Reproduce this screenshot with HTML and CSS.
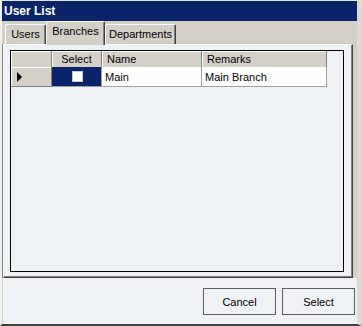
FILE: index.html
```html
<!DOCTYPE html>
<html>
<head>
<meta charset="utf-8">
<title>User List</title>
<link rel="stylesheet" href="styles.css">
</head>
<body>
<div class="window">
  <div class="titlebar">User List</div>
  <div class="tabs">
    <div class="tab tab-users">Users</div>
    <div class="tab tab-active tab-branches">Branches</div>
    <div class="tab tab-departments">Departments</div>
  </div>
  <div class="panel">
    <div class="grid">
      <div class="grid-row grid-head">
        <div class="cell hcell"></div>
        <div class="cell hcell center">Select</div>
        <div class="cell hcell">Name</div>
        <div class="cell hcell">Remarks</div>
      </div>
      <div class="grid-row grid-data">
        <div class="cell rowhead"><span class="arrow"></span></div>
        <div class="cell selcell"><span class="check"></span></div>
        <div class="cell dcell">Main</div>
        <div class="cell dcell">Main Branch</div>
      </div>
    </div>
  </div>
  <div class="footer">
    <button class="btn">Cancel</button>
    <button class="btn">Select</button>
  </div>
</div>
</body>
</html>
```
FILE: styles.css
```css
html, body {
  margin: 0;
  padding: 0;
  background: #d4d0c8;
}

body {
  font-family: "Liberation Sans", Arial, sans-serif;
  font-size: 11px;
  color: #000;
}

.window {
  width: 362px;
  height: 326px;
  box-sizing: border-box;
  background: #d4d0c8;
  border-top: 1px solid #e4e2dc;
  border-left: 2px solid #f2f1ee;
  border-right: 5px solid #dedbd4;
  border-bottom: 2px solid #404040;
  display: flex;
  flex-direction: column;
}

.titlebar {
  height: 20px;
  flex: none;
  background: #0a246a;
  color: #fff;
  font-weight: bold;
  font-size: 12px;
  line-height: 20px;
  padding-left: 2px;
}

.tabs {
  height: 23px;
  flex: none;
  display: flex;
  align-items: flex-end;
  padding-left: 3px;
  position: relative;
  z-index: 1;
}

.tab {
  box-sizing: border-box;
  height: 20px;
  border-top: 1px solid #fff;
  border-left: 1px solid #fff;
  border-right: 1px solid #404040;
  box-shadow: inset -1px 0 0 #808080;
  border-radius: 2px 2px 0 0;
  text-align: center;
  line-height: 18px;
  background: #d4d0c8;
}

.tab-users { width: 41px; }
.tab-departments { width: 71px; }

.tab-active {
  width: 59px;
  height: 24px;
  margin-bottom: -1px;
  line-height: 18px;
  padding-bottom: 3px;
}

.panel {
  height: 234px;
  flex: none;
  box-sizing: border-box;
  width: 350px;
  margin-left: 1px;
  background: #eef2f5;
  border-top: 1px solid #fff;
  border-left: 1px solid #fff;
  border-right: 1px solid #404040;
  border-bottom: 1px solid #404040;
  box-shadow: inset -1px -1px 0 #808080, -1px 0 0 #808080;
  padding: 5px 8px 5px 6px;
}

.grid {
  box-sizing: border-box;
  width: 334px;
  height: 222px;
  border: 1px solid #000;
  background: #eef2f5;
}

.grid-row {
  display: grid;
  grid-template-columns: 41px 50px 100px 125px;
}

.grid-head {
  height: 16px;
}

.grid-data {
  height: 20px;
}

.cell {
  box-sizing: border-box;
  display: flex;
  align-items: center;
  overflow: hidden;
  white-space: nowrap;
}

.hcell {
  background: #d4d0c8;
  border-right: 1px solid #808080;
  box-shadow: inset 1px 1px 0 #fff;
  padding-left: 5px;
  line-height: 15px;
}

.hcell.center {
  justify-content: center;
  padding-left: 0;
}

.rowhead {
  background: #d4d0c8;
  border-right: 1px solid #808080;
  border-bottom: 1px solid #808080;
  box-shadow: inset 1px 1px 0 #fff;
  padding-left: 6px;
}

.arrow {
  width: 0;
  height: 0;
  border-left: 5px solid #000;
  border-top: 5px solid transparent;
  border-bottom: 5px solid transparent;
}

.selcell {
  background: #0a246a;
  border-right: 1px solid #a0a0a0;
  border-bottom: 1px solid #a0a0a0;
  justify-content: center;
}

.check {
  box-sizing: border-box;
  width: 11px;
  height: 11px;
  background: #fff;
  border: 1px solid #c8c8c8;
  margin-left: 1px;
}

.dcell {
  background: #fff;
  border-right: 1px solid #a0a0a0;
  border-bottom: 1px solid #a0a0a0;
  padding-left: 3px;
}

.footer {
  flex: 1;
  background: #eef2f5;
  margin-left: 1px;
  display: flex;
  justify-content: flex-end;
  align-items: flex-start;
  gap: 6px;
  padding: 10px 2px 0 0;
}

.btn {
  box-sizing: border-box;
  width: 73px;
  height: 27px;
  margin: 0;
  padding: 0;
  background: #eef2f5;
  border: 1px solid #5c5c5c;
  border-radius: 0;
  font-family: "Liberation Sans", Arial, sans-serif;
  font-size: 11px;
  color: #000;
}
```
